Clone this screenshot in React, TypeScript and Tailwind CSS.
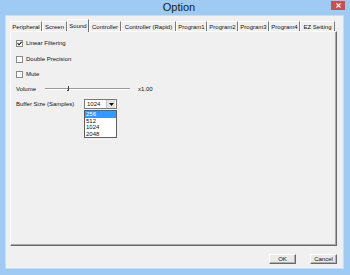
import { ReactNode } from "react";

const TABS = [
  { label: "Peripheral", w: "w-[32px]" },
  { label: "Screen", w: "w-[25px]" },
  { label: "Sound", w: "w-[22px]", active: true },
  { label: "Controller", w: "w-[32px]" },
  { label: "Controller (Rapid)", w: "w-[55px]" },
  { label: "Program1", w: "w-[31px]" },
  { label: "Program2", w: "w-[31px]" },
  { label: "Program3", w: "w-[31px]" },
  { label: "Program4", w: "w-[31px]" },
  { label: "EZ Setting", w: "w-[35px]" },
];

function CheckRow({ label, checked }: { label: string; checked?: boolean }) {
  return (
    <div className="flex items-center h-[8px]">
      <div className="w-[7px] h-[7px] bg-white border border-[#8a8a8a] flex items-center justify-center">
        {checked && (
          <svg width="5" height="5" viewBox="0 0 5 5">
            <path d="M0.5 2.2 L2 3.8 L4.6 0.8" stroke="#111" strokeWidth="1.1" fill="none" />
          </svg>
        )}
      </div>
      <span className="ml-[3px] leading-none">{label}</span>
    </div>
  );
}

function Button({ children }: { children: ReactNode }) {
  return (
    <button
      type="button"
      className="w-[27px] h-[10px] bg-[#eaeaea] border-l border-t border-r border-b border-l-white border-t-white border-r-[#6a6a6a] border-b-[#6a6a6a] shadow-[inset_-1px_-1px_0_#b0b0b0] flex items-center justify-center leading-none text-[6px] text-[#111]"
    >
      {children}
    </button>
  );
}

export default function App() {
  return (
    <div className="w-[350px] h-[275px] bg-[#9ecaf3] flex flex-col font-['Liberation_Sans',Arial,sans-serif] text-[6px] text-[#111]">
      {/* Title bar */}
      <div className="h-[15px] flex items-start shrink-0">
        <div className="w-[27px]" />
        <div className="flex-1 h-[15px] flex items-center justify-center text-[11px] leading-none text-[#1a1a1a]">
          Option
        </div>
        <div className="w-[14px] h-[9px] mt-[1px] mr-[5px] bg-[#c75050] flex items-center justify-center">
          <svg width="5" height="5" viewBox="0 0 5 5">
            <path d="M0.5 0.5 L4.5 4.5 M4.5 0.5 L0.5 4.5" stroke="#fff" strokeWidth="1.1" />
          </svg>
        </div>
      </div>

      {/* Frame */}
      <div className="flex-1 flex flex-col pl-[5px] pr-[6px] pb-[6px]">
        <div className="flex-1 bg-[#f0f0f0] border border-[#c6ddf2] flex flex-col pl-[4px] pr-[6px] pt-[3px]">
          {/* Tabs */}
          <div className="h-[12px] flex items-end shrink-0">
            {TABS.map((t) =>
              t.active ? (
                <div
                  key={t.label}
                  className={`${t.w} h-[13px] -mb-px relative z-10 bg-[#f0f0f0] border-l border-t border-r border-l-white border-t-white border-r-[#6f6f6f] flex items-center justify-center leading-none whitespace-nowrap`}
                >
                  {t.label}
                </div>
              ) : (
                <div
                  key={t.label}
                  className={`${t.w} h-[10px] border-l border-t border-r border-l-white border-t-white border-r-[#7a7a7a] flex items-center justify-center leading-none whitespace-nowrap`}
                >
                  {t.label}
                </div>
              ),
            )}
          </div>

          {/* Page */}
          <div className="flex-1 border-l border-t border-r border-b border-l-white border-t-white border-r-[#6a6a6a] border-b-[#6a6a6a] shadow-[inset_-1px_-1px_0_#a8a8a8] pl-[5px] pt-[7px] flex flex-col">
            <CheckRow label="Linear Filtering" checked />
            <div className="mt-[8px]">
              <CheckRow label="Double Precision" />
            </div>
            <div className="mt-[7px]">
              <CheckRow label="Mute" />
            </div>

            {/* Volume */}
            <div className="mt-[7px] h-[8px] flex items-center">
              <span className="w-[29px] leading-none">Volume</span>
              <div className="relative w-[85px] h-[2px] border-t border-b border-t-[#9a9a9a] border-b-white">
                <div className="absolute left-[22px] top-[-3px] w-[2px] h-[5px] border-r border-b border-r-[#444] border-b-[#444]" />
              </div>
              <span className="ml-[8px] leading-none">x1.00</span>
            </div>

            {/* Buffer size */}
            <div className="mt-[6px] h-[10px] flex items-center">
              <span className="w-[68px] leading-none whitespace-nowrap">Buffer Size (Samples)</span>
              <div className="relative">
                <div className="w-[33px] h-[10px] bg-white border border-[#7a7a7a] flex items-center">
                  <span className="flex-1 pl-[2px] leading-none">1024</span>
                  <div className="w-[9px] h-[8px] mr-px bg-[#e6e6e6] border-l border-[#c4c4c4] flex items-center justify-center">
                    <svg width="5" height="3" viewBox="0 0 5 3">
                      <path d="M0 0 L5 0 L2.5 3 Z" fill="#111" />
                    </svg>
                  </div>
                </div>
                <div className="absolute left-0 top-[11px] w-[33px] bg-white border border-[#5f5f5f] flex flex-col z-20">
                  {["256", "512", "1024", "2048"].map((v, i) => (
                    <div
                      key={v}
                      className={`h-[6.5px] pl-[1px] flex items-center leading-none ${i === 0 ? "bg-[#3399ff] text-white" : ""}`}
                    >
                      {v}
                    </div>
                  ))}
                </div>
              </div>
            </div>
          </div>

          {/* Buttons */}
          <div className="h-[22px] shrink-0 flex items-start justify-end gap-[14px] pt-[8px]">
            <Button>OK</Button>
            <Button>Cancel</Button>
          </div>
        </div>
      </div>
    </div>
  );
}
